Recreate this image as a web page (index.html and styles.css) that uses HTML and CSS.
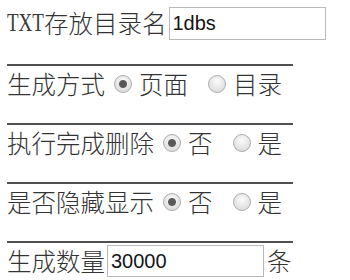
FILE: index.html
```html
<!DOCTYPE html>
<html lang="zh-CN">
<head>
<meta charset="utf-8">
<title>设置</title>
<link rel="stylesheet" href="styles.css">
</head>
<body>
<form class="form">
  <div class="row first">
    <span class="label"><span class="latin">TXT</span>存放目录名</span>
    <input class="field" type="text" value="1dbs">
  </div>
  <div class="sep"></div>
  <div class="row">
    <span class="label">生成方式</span>
    <label class="opt"><input class="radio" type="radio" name="mode" checked><span>页面</span></label>
    <label class="opt"><input class="radio" type="radio" name="mode"><span>目录</span></label>
  </div>
  <div class="sep"></div>
  <div class="row">
    <span class="label">执行完成删除</span>
    <label class="opt"><input class="radio" type="radio" name="del" checked><span>否</span></label>
    <label class="opt"><input class="radio" type="radio" name="del"><span>是</span></label>
  </div>
  <div class="sep"></div>
  <div class="row">
    <span class="label">是否隐藏显示</span>
    <label class="opt"><input class="radio" type="radio" name="hide" checked><span>否</span></label>
    <label class="opt"><input class="radio" type="radio" name="hide"><span>是</span></label>
  </div>
  <div class="sep"></div>
  <div class="row">
    <span class="label">生成数量</span>
    <input class="field" type="text" value="30000">
    <span class="unit">条</span>
  </div>
</form>
</body>
</html>
```
FILE: styles.css
```css
html, body {
  margin: 0;
  padding: 0;
  background: #ffffff;
}

body {
  padding: 5px 0 0 7px;
  font-family: "Noto Sans CJK SC", "Liberation Serif", serif;
  font-size: 24.5px;
  font-weight: 300;
  color: #333333;
}

.form {
  display: flex;
  flex-direction: column;
  align-items: flex-start;
}

.row {
  display: flex;
  align-items: center;
  height: 36px;
  white-space: nowrap;
}

.row.first {
  margin-bottom: 2px;
}

.label {
  display: inline-flex;
  align-items: center;
  line-height: 1;
}

.latin {
  display: inline-block;
  width: 37px;
  font-family: "Liberation Serif", serif;
  font-size: 26px;
  font-weight: 400;
  transform: scaleX(0.73);
  transform-origin: left center;
  color: #3a3a3a;
}

.sep {
  width: 286px;
  height: 2px;
  margin-top: 21px;
  background: #505050;
}

.field {
  box-sizing: border-box;
  flex: none;
  width: 157px;
  height: 33px;
  margin: 0 0 0 2px;
  padding: 0 3px;
  border: 1px solid #b9b9b9;
  background: #ffffff;
  font-family: "Liberation Sans", Arial, sans-serif;
  font-size: 20px;
  color: #151515;
  outline: none;
}

.row:last-child .field {
  height: 32px;
}

.unit {
  margin-left: 3px;
  line-height: 1;
}

.opt {
  display: inline-flex;
  align-items: center;
  line-height: 1;
}

.opt + .opt {
  margin-left: 20px;
}

.label + .opt {
  margin-left: 9px;
}

.radio {
  appearance: none;
  -webkit-appearance: none;
  box-sizing: border-box;
  flex: none;
  width: 18px;
  height: 18px;
  margin: 0 7px 0 0;
  border: 1px solid #adadad;
  border-radius: 50%;
  background: radial-gradient(circle at 50% 35%, #fbfbfb 0%, #e6e6e6 55%, #d2d2d2 100%);
}

.radio:checked {
  background:
    radial-gradient(circle, #555555 0, #5c5c5c 3.5px, rgba(90, 90, 90, 0) 4.5px),
    radial-gradient(circle at 50% 35%, #fbfbfb 0%, #e6e6e6 55%, #d2d2d2 100%);
}
```
